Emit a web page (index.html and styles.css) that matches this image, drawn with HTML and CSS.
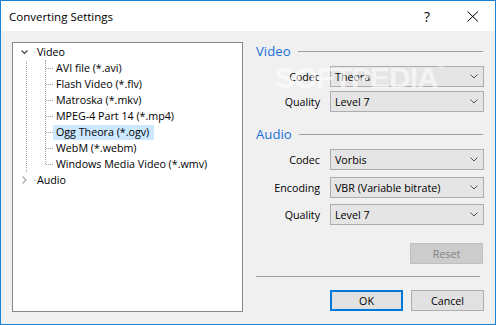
FILE: index.html
```html
<!DOCTYPE html>
<html>
<head>
<meta charset="utf-8">
<link rel="stylesheet" href="styles.css">
</head>
<body>
<div class="window">
  <div class="titlebar">
    <span class="title">Converting Settings</span>
    <span class="help">?</span>
    <span class="close"><svg width="12" height="11" viewBox="0 0 12 11"><path d="M0.5 0.5 L11 10.5 M11 0.5 L0.5 10.5" stroke="#000" stroke-width="1" fill="none"/></svg></span>
  </div>
  <div class="content">
    <div class="tree">
      <ul class="tv">
        <li class="node">
          <div class="row root-row"><span class="exp"><svg width="7" height="5" viewBox="0 0 7 5"><path d="M0.5 0.5 L3.5 3.5 L6.5 0.5" stroke="#404040" stroke-width="1.2" fill="none"/></svg></span><span class="stub"></span><span class="label">Video</span></div>
          <ul class="kids">
            <li class="child"><div class="row"><span class="label">AVI file (*.avi)</span></div></li>
            <li class="child"><div class="row"><span class="label">Flash Video (*.flv)</span></div></li>
            <li class="child"><div class="row"><span class="label">Matroska (*.mkv)</span></div></li>
            <li class="child"><div class="row"><span class="label">MPEG-4 Part 14 (*.mp4)</span></div></li>
            <li class="child"><div class="row"><span class="label selected">Ogg Theora (*.ogv)</span></div></li>
            <li class="child"><div class="row"><span class="label">WebM (*.webm)</span></div></li>
            <li class="child"><div class="row"><span class="label">Windows Media Video (*.wmv)</span></div></li>
          </ul>
        </li>
        <li class="node">
          <div class="row root-row"><span class="exp"><svg width="5" height="8" viewBox="0 0 5 8"><path d="M0.5 0.5 L4 4 L0.5 7.5" stroke="#a6a6a6" stroke-width="1.2" fill="none"/></svg></span><span class="stub"></span><span class="label">Audio</span></div>
        </li>
      </ul>
    </div>
    <div class="settings">
      <div class="group-head"><span class="gh-text">Video</span><span class="rule"></span></div>
      <div class="field f1"><span class="flabel">Codec</span><div class="combo"><span>Theora</span><svg width="8" height="5" viewBox="0 0 8 5"><path d="M0.5 0.5 L4 4 L7.5 0.5" stroke="#505050" stroke-width="1" fill="none"/></svg></div></div>
      <div class="field f2"><span class="flabel">Quality</span><div class="combo"><span>Level 7</span><svg width="8" height="5" viewBox="0 0 8 5"><path d="M0.5 0.5 L4 4 L7.5 0.5" stroke="#505050" stroke-width="1" fill="none"/></svg></div></div>
      <div class="group-head gh2"><span class="gh-text">Audio</span><span class="rule"></span></div>
      <div class="field f1"><span class="flabel">Codec</span><div class="combo"><span>Vorbis</span><svg width="8" height="5" viewBox="0 0 8 5"><path d="M0.5 0.5 L4 4 L7.5 0.5" stroke="#505050" stroke-width="1" fill="none"/></svg></div></div>
      <div class="field f3"><span class="flabel">Encoding</span><div class="combo"><span>VBR (Variable bitrate)</span><svg width="8" height="5" viewBox="0 0 8 5"><path d="M0.5 0.5 L4 4 L7.5 0.5" stroke="#505050" stroke-width="1" fill="none"/></svg></div></div>
      <div class="field f4"><span class="flabel">Quality</span><div class="combo"><span>Level 7</span><svg width="8" height="5" viewBox="0 0 8 5"><path d="M0.5 0.5 L4 4 L7.5 0.5" stroke="#505050" stroke-width="1" fill="none"/></svg></div></div>
      <div class="reset-row"><button class="btn disabled">Reset</button></div>
      <div class="sep"></div>
      <div class="actions"><button class="btn default">OK</button><button class="btn">Cancel</button></div>
      <div class="watermark">SOFTPEDIA<sup>®</sup></div>
    </div>
  </div>
</div>
</body>
</html>
```

FILE: styles.css
```css
* { box-sizing: border-box; }
html, body { margin: 0; padding: 0; }
body {
  font-family: "Open Sans", "Noto Sans", sans-serif;
  font-size: 10.7px;
  color: #000;
  background: #fff;
}
.window {
  width: 496px;
  height: 325px;
  border: 1px solid #1883d7;
  background: #f0f0f0;
  display: flex;
  flex-direction: column;
}
.titlebar {
  height: 30px;
  background: #fff;
  display: flex;
  align-items: center;
  padding-left: 8px;
  flex: none;
}
.title { font-size: 11.5px; flex: 1; }
.help { font-size: 14px; width: 20px; margin-right: 30px; text-align: center; }
.close { display: flex; margin-right: 16px; }

.content {
  display: flex;
  padding: 11px 10px 0 11px;
  gap: 13px;
}
.tree {
  width: 231px;
  height: 270px;
  background: #fff;
  border: 1px solid #828790;
  padding-top: 1px;
  flex: none;
}
ul { list-style: none; margin: 0; padding: 0; }
.tv { position: relative; }
.tv::before {
  content: "";
  position: absolute;
  left: 13px;
  top: 14px;
  height: 118px;
  border-left: 1px dotted #a0a0a0;
}
.row {
  height: 16px;
  display: flex;
  align-items: center;
  white-space: nowrap;
}
.exp {
  width: 8px;
  margin-left: 7px;
  height: 16px;
  display: flex;
  align-items: center;
  justify-content: center;
  position: relative;
  z-index: 1;
  background: #fff;
}
.stub {
  width: 1px;
  height: 1px;
  background: #a0a0a0;
  margin-left: 6px;
}
.root-row .label { margin-left: 2px; }
.kids { position: relative; }
.kids::before {
  content: "";
  position: absolute;
  left: 32px;
  top: 0;
  bottom: 8px;
  border-left: 1px dotted #a0a0a0;
}
.child .row { padding-left: 40px; position: relative; }
.child .row::before {
  content: "";
  position: absolute;
  left: 33px;
  top: 8px;
  width: 7px;
  border-top: 1px dotted #a0a0a0;
}
.child .label {
  padding: 0 5px 0 3px;
  height: 15px;
  line-height: 15px;
}
.label.selected { background: #cce8ff; }

.settings {
  width: 228px;
  flex: none;
  display: flex;
  flex-direction: column;
  position: relative;
}
.group-head {
  height: 18px;
  display: flex;
  align-items: center;
  gap: 7px;
}
.gh2 { margin-top: 13px; }
.gh-text { color: #1a6fd8; font-size: 13.2px; }
.rule { flex: 1; height: 1px; background: #a0a0a0; margin-right: 1px; }
.field {
  display: flex;
  align-items: center;
  height: 21px;
}
.field.f1 { margin-top: 6px; }
.field.f2 { margin-top: 4px; }
.field.f3 { margin-top: 7px; }
.field.f4 { margin-top: 6px; }
.flabel {
  width: 64px;
  text-align: right;
  margin-right: 10px;
}
.combo {
  flex: 1;
  height: 21px;
  background: #e5e5e5;
  border: 1px solid #adadad;
  display: flex;
  align-items: center;
  justify-content: space-between;
  padding: 0 5px 0 4px;
}
.reset-row {
  display: flex;
  justify-content: flex-end;
  margin-top: 18px;
  padding-right: 1px;
}
.btn {
  font-family: inherit;
  font-size: 10.7px;
  width: 73px;
  height: 21px;
  background: #e1e1e1;
  border: 1px solid #adadad;
  padding: 0;
  color: #000;
}
.btn.disabled { background: #cccccc; border-color: #bfbfbf; color: #838383; }
.btn.default { border: 2px solid #0078d7; }
.sep {
  height: 1px;
  background: #a0a0a0;
  margin-top: 12px;
  margin-right: 4px;
}
.actions {
  display: flex;
  justify-content: flex-end;
  gap: 8px;
  margin-top: 13px;
}
.watermark {
  position: absolute;
  left: 19px;
  top: 19px;
  font-family: "Liberation Sans", sans-serif;
  font-weight: bold;
  font-size: 30px;
  letter-spacing: -1px;
  color: rgba(255, 255, 255, 0.6);
  pointer-events: none;
}
.watermark sup { font-size: 9px; vertical-align: top; }
```
